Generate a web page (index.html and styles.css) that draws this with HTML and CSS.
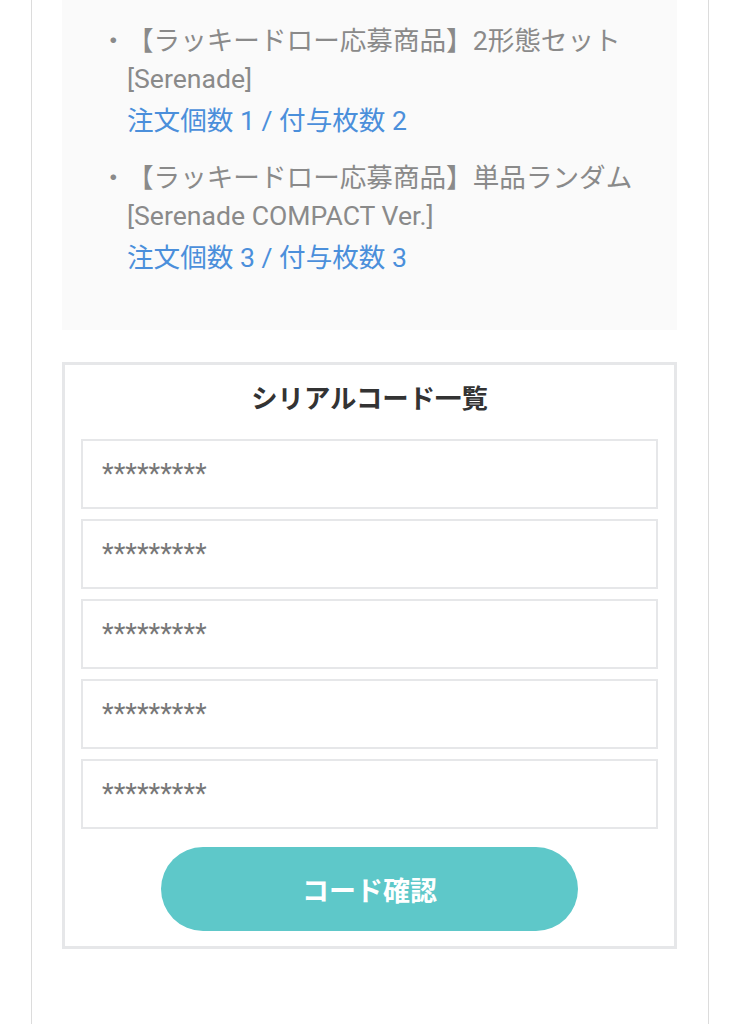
FILE: index.html
```html
<!DOCTYPE html>
<html lang="ja">
<head>
<meta charset="utf-8">
<title>シリアルコード一覧</title>
<link rel="stylesheet" href="styles.css">
</head>
<body>
<div class="page">
  <div class="panel">
    <ul class="items">
      <li class="item">
        <span class="mark">・</span>
        <div class="item-body">
          <p class="name">【ラッキードロー応募商品】2形態セット [Serenade]</p>
          <p class="count">注文個数 1 / 付与枚数 2</p>
        </div>
      </li>
      <li class="item">
        <span class="mark">・</span>
        <div class="item-body">
          <p class="name">【ラッキードロー応募商品】単品ランダム [Serenade COMPACT Ver.]</p>
          <p class="count">注文個数 3 / 付与枚数 3</p>
        </div>
      </li>
    </ul>
  </div>

  <div class="serial-box">
    <h2 class="serial-title">シリアルコード一覧</h2>
    <div class="serial-list">
      <input class="serial-input" type="text" placeholder="*********">
      <input class="serial-input" type="text" placeholder="*********">
      <input class="serial-input" type="text" placeholder="*********">
      <input class="serial-input" type="text" placeholder="*********">
      <input class="serial-input" type="text" placeholder="*********">
    </div>
    <button class="confirm-btn" type="button">コード確認</button>
  </div>
</div>
</body>
</html>
```

FILE: styles.css
```css
* {
  box-sizing: border-box;
}

html, body {
  margin: 0;
  padding: 0;
  background: #ffffff;
}

body {
  font-family: "Roboto", "Noto Sans CJK JP", sans-serif;
}

.page {
  margin-left: 31px;
  width: 678px;
  min-height: 1024px;
  border-left: 1px solid #dcdcdc;
  border-right: 1px solid #dcdcdc;
  padding: 0 31px 0 30px;
}

.panel {
  background: #fafafa;
  padding: 22px 0 53px 0;
}

.items {
  list-style: none;
  margin: 0;
  padding: 0 0 0 38px;
  display: flex;
  flex-direction: column;
  gap: 19px;
}

.item {
  display: flex;
  font-size: 26.6px;
  line-height: 38px;
}

.mark {
  flex: 0 0 27px;
  color: #8a8a8a;
}

.item-body {
  flex: 1;
}

.name {
  margin: 0;
  color: #8a8a8a;
  padding-right: 20px;
}

.count {
  margin: 4px 0 0 0;
  color: #4b8fdb;
}

.serial-box {
  margin-top: 32px;
  border: 3px solid #e6e7e9;
  padding: 15px 16px 15px 16px;
  display: flex;
  flex-direction: column;
}

.serial-title {
  margin: 0;
  text-align: center;
  font-size: 26.4px;
  line-height: 38px;
  font-weight: 700;
  color: #333333;
}

.serial-list {
  margin-top: 21px;
  display: flex;
  flex-direction: column;
  gap: 10px;
}

.serial-input {
  display: block;
  width: 100%;
  height: 70px;
  margin: 0;
  border: 2px solid #e6e7e9;
  border-radius: 0;
  background: #ffffff;
  padding: 0 19px;
  font-family: "Roboto", "Noto Sans CJK JP", sans-serif;
  font-size: 27px;
  color: #777777;
  outline: none;
}

.serial-input::placeholder {
  color: #777777;
  opacity: 1;
}

.confirm-btn {
  display: block;
  align-self: center;
  width: 417px;
  height: 84px;
  margin-top: 18px;
  border: none;
  border-radius: 42px;
  background: #5ec8c9;
  color: #ffffff;
  font-family: "Roboto", "Noto Sans CJK JP", sans-serif;
  font-size: 27px;
  font-weight: 700;
  letter-spacing: 0;
  cursor: pointer;
}
```
